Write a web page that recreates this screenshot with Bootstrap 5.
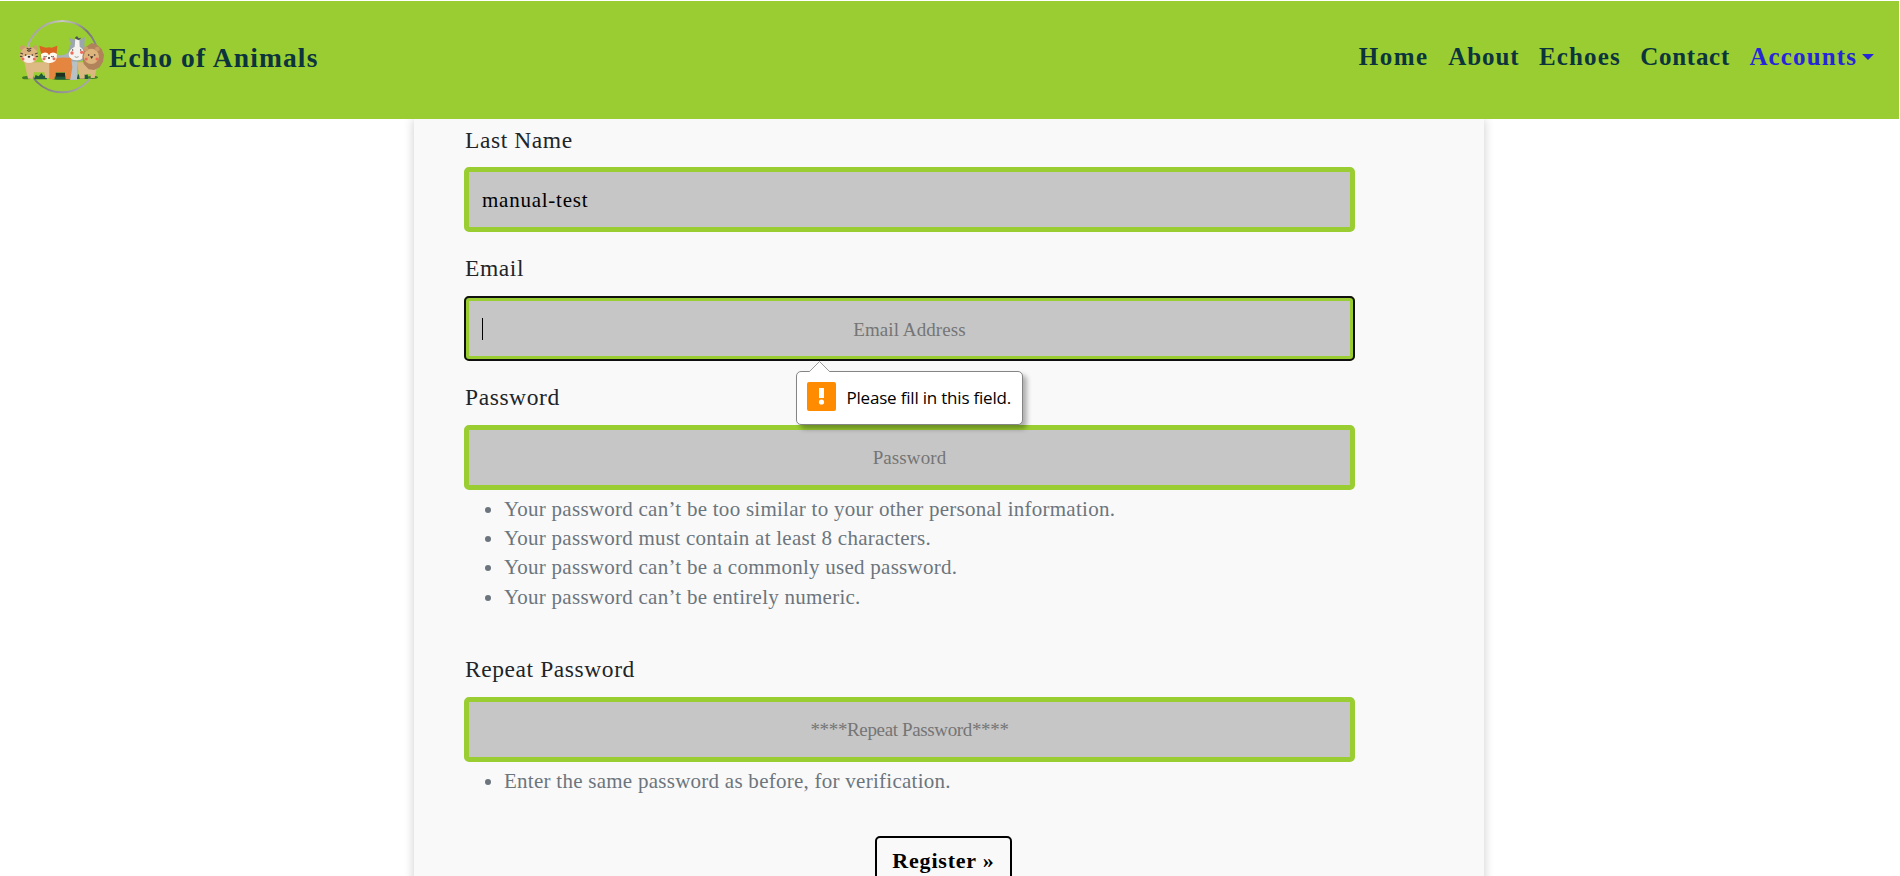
<!DOCTYPE html>
<html lang="en">
<head>
<meta charset="utf-8">
<meta name="viewport" content="width=device-width, initial-scale=1">
<title>Echo of Animals - Register</title>
<link href="https://cdn.jsdelivr.net/npm/bootstrap@5.3.0/dist/css/bootstrap.min.css" rel="stylesheet">
<style>
body{font-family:"Liberation Serif",serif;height:876px;overflow:hidden;background:#fff}
.site-nav{--bs-navbar-padding-y:0;background:#9acd32;height:118px;margin:1px 1px 0 0;padding:0 15px 0 10px;position:relative;z-index:2}
.site-nav .navbar-brand{font-size:27.5px;font-weight:700;letter-spacing:1.13px;color:#0c343d;margin:0;padding:0;line-height:30px}
.brand-logo{width:100px;height:90px;display:block;margin-top:-10px}
.brand-text{margin-top:-5px;margin-left:-1px}
.site-nav .nav-link{font-size:25px;font-weight:700;color:#0c343d;line-height:30px;padding:0 10px 0 9.5px!important;white-space:nowrap}
.site-nav .navbar-nav{margin-top:-7px}
.t-home{letter-spacing:1.5px}.t-about{letter-spacing:.9px}.t-echoes{letter-spacing:1.15px}.t-contact{letter-spacing:.7px}.t-accounts{letter-spacing:1.12px}
.site-nav .nav-link.dropdown-toggle{color:#2626d9}
.site-nav .dropdown-toggle::after{margin-left:5px;border-top-width:6px;border-right-width:6px;border-left-width:6px;vertical-align:5px}
.form-panel{width:1070px;height:800px;margin-left:414px;padding:4px 0 0 50px;background:#f9f9f9;box-shadow:0 0 10px rgba(0,0,0,.2)}
.field-row{width:891px;margin-bottom:19px}
.field-row label{font-size:23.5px;line-height:34px;margin-bottom:11px;display:block;letter-spacing:.58px;padding-left:1px}
.field-row:first-child label{margin-bottom:10px}
.field-row .form-control{height:65px;border:5px solid #9acd32;border-radius:5px;background:#c6c6c6;color:#000;font-size:21px;padding:1px 13px 0;letter-spacing:.75px;box-shadow:none}
.field-row .form-control::placeholder{font-size:19px;letter-spacing:.1px;text-align:center;color:#757575;opacity:1}
.field-row .form-control[type=password]{padding-top:0}
.field-row .tight::placeholder{letter-spacing:-.36px}
.field-row .is-active{outline:2px solid #101010;outline-offset:-2px}
.caret-bar{position:absolute;left:18px;top:22px;width:1px;height:22px;background:#000}
.help-list{font-size:21px;line-height:29.4px;color:#6c757d;margin:4.6px 0 0;padding-left:40px;letter-spacing:.26px}
.field-row.with-help{margin-bottom:39.8px}
.field-row.last{margin-bottom:40px}
.btn-register{margin-left:411px;width:137px;height:50px;border:2px solid #000;border-radius:5px;color:#000;font-size:22px;font-weight:700;letter-spacing:.8px;padding:0 0 2px;white-space:nowrap}
.hint{position:absolute;left:332px;top:75px;width:227px;height:54px;background:#fff;border:1px solid #858585;border-radius:5px;box-shadow:4px 4px 5px rgba(0,0,0,.3);font-family:"Open Sans",sans-serif;font-size:17px;letter-spacing:-.2px;color:#000;z-index:3;padding:0 0 0 10px;white-space:nowrap}
.hint-arrow{position:absolute;left:11px;top:-12px}
.hint-icon{margin-right:10.5px;margin-top:-4px}
</style>
</head>
<body>
<nav class="navbar site-nav d-flex flex-nowrap align-items-center justify-content-between">
  <a class="navbar-brand d-flex align-items-center" href="#">
    <svg class="brand-logo" viewBox="0 0 300 270">
      <defs>
        <linearGradient id="ring" x1="0" y1="0" x2="1" y2="1"><stop offset="0" stop-color="#777"/><stop offset=".25" stop-color="#c9c9c4"/><stop offset=".5" stop-color="#777"/><stop offset=".8" stop-color="#999"/><stop offset="1" stop-color="#ccc"/></linearGradient>
      </defs>
      <circle cx="156" cy="140" r="107" fill="none" stroke="url(#ring)" stroke-width="6"/>
      <!-- grass -->
      <g fill="#3f7d24"><ellipse cx="50" cy="203" rx="14" ry="5"/><ellipse cx="156" cy="204" rx="36" ry="6"/><ellipse cx="248" cy="202" rx="16" ry="5"/></g>
      <g fill="#205a3c"><path d="M72 208l5-13 9 4 8-10 7 9 8-3 2 13z"/><path d="M134 208l5-14 9 3 7-9 7 9 9-3 5 14z"/><path d="M200 207l4-14 8 3 7-10 6 9 8-2 2 14z"/></g>
      <!-- horse -->
      <path d="M135 135q25 4 45-10l20 20v64h-20v-40h-40z" fill="#a9b3ba"/>
      <path d="M183 101l-6-18 17 6 8-6 9 6 14-8-2 25q7 15 4 32-4 17-25 17-26 0-27-20-1-20 8-34z" fill="#9ca6ad"/>
      <path d="M196 86h12l1 24q13 8 14 20 1 20-21 21-24 0-26-16 0-16 18-25z" fill="#f5f3ef"/>
      <path d="M194 84l7-6 5 7 8-2-7 8-8-3z" fill="#4c5459"/>
      <path d="M181 155h20v54h-21z" fill="#b9c1c5"/>
      <!-- lion -->
      <path d="M201 157h62l-9 47h-12v-11h-18v13h-15z" fill="#dcb780"/>
      <path d="M245 99l16 5 14 13 7 18-3 20-10 17-17 8-16-2-15-16-4-22 5-25z" fill="#b0835a"/>
      <circle cx="244" cy="139" r="23" fill="#ddb47c"/><circle cx="228" cy="117" r="7" fill="#c99b6b"/><circle cx="262" cy="117" r="7" fill="#c99b6b"/>
      <!-- tiger -->
      <path d="M43 157h75v47h-12l-3-17H72l-4 19H54z" fill="#ddb983"/>
      <circle cx="38" cy="114" r="8" fill="#c9a06c"/><circle cx="76" cy="114" r="8" fill="#c9a06c"/>
      <ellipse cx="57" cy="136" rx="28" ry="25" fill="#ddb57e"/><ellipse cx="57" cy="147" rx="19" ry="12" fill="#f7eddf"/>
      <path d="M50 114l7 4 7-4M51 121l6 3 6-3M31 129l8 3M83 129l-8 3M30 139l7 1M84 139l-7 1" stroke="#55473a" stroke-width="3.500" fill="none"/>
      <!-- fox -->
      <path d="M118 148q30-8 65-4l4 28-6 36h-14l-2-21h-28l-4 21h-15z" fill="#e4863f"/>
      <path d="M137 188h28v12h-28z" fill="#20301f"/>
      <path d="M88 107l20 6q10-2 17 0l17-6-2 22q3 15-4 22-8 9-19 9t-20-9q-8-10-4-22z" fill="#da6420"/>
      <path d="M93 132q11-8 20-2l4 6 4-6q11-6 20 2 2 27-24 28-26-2-24-28z" fill="#fff8ef"/>
      <g fill="#3b302c"><circle cx="47" cy="135" r="2.5"/><circle cx="67" cy="135" r="2.5"/><ellipse cx="57" cy="140" rx="4" ry="3"/><path d="M101 137q5 5 9 0v3q-4 3-9 0zM123 137q5 5 9 0v3q-4 3-9 0z"/><circle cx="117" cy="144" r="3"/><circle cx="188" cy="120" r="2"/><circle cx="212" cy="120" r="2"/><circle cx="236" cy="135" r="2.5"/><circle cx="254" cy="135" r="2.5"/><path d="M240 139h10l-5 8z"/></g>
      <path d="M194 140q6 4 12 0" stroke="#776b69" stroke-width="2" fill="none"/>
      <g fill="#f0695a"><circle cx="39" cy="147" r="4.500"/><circle cx="73" cy="147" r="4.500"/><circle cx="102" cy="146" r="4.500"/><circle cx="132" cy="146" r="4.500"/><circle cx="186" cy="129" r="5"/><circle cx="215" cy="127" r="5"/><circle cx="229" cy="147" r="4.500"/><circle cx="261" cy="147" r="4.500"/></g>
    </svg>
    <span class="brand-text">Echo of Animals</span>
  </a>
  <ul class="navbar-nav flex-row">
    <li class="nav-item"><a class="nav-link t-home" href="#">Home</a></li>
    <li class="nav-item"><a class="nav-link t-about" href="#">About</a></li>
    <li class="nav-item"><a class="nav-link t-echoes" href="#">Echoes</a></li>
    <li class="nav-item"><a class="nav-link t-contact" href="#">Contact</a></li>
    <li class="nav-item dropdown"><a class="nav-link dropdown-toggle t-accounts" href="#" role="button">Accounts</a></li>
  </ul>
</nav>
<main class="form-panel">
  <form>
    <div class="field-row">
      <label for="last">Last Name</label>
      <input id="last" class="form-control" type="text" value="manual-test">
    </div>
    <div class="field-row">
      <label for="email">Email</label>
      <div class="position-relative">
        <input id="email" class="form-control is-active" type="email" placeholder="Email Address">
        <span class="caret-bar"></span>
        <div class="hint d-flex align-items-center" role="tooltip">
          <svg class="hint-arrow" width="24" height="13" viewBox="0 0 24 13"><path d="M1 12L11.500 1.500 22 12V13H1z" fill="#fff"/><path d="M1 12L11.500 1.500 22 12" fill="none" stroke="#9a9a9a"/></svg>
          <svg class="hint-icon" width="29" height="29" viewBox="0 0 29 29"><rect width="29" height="29" rx="2" fill="#ff8c00"/><path d="M12 6h5v10h-5z" fill="#fff"/><circle cx="14.500" cy="20" r="2.600" fill="#fff"/></svg>
          <span>Please fill in this field.</span>
        </div>
      </div>
    </div>
    <div class="field-row with-help">
      <label for="pw">Password</label>
      <input id="pw" class="form-control" type="password" placeholder="Password">
      <ul class="help-list">
        <li>Your password can’t be too similar to your other personal information.</li>
        <li>Your password must contain at least 8 characters.</li>
        <li>Your password can’t be a commonly used password.</li>
        <li>Your password can’t be entirely numeric.</li>
      </ul>
    </div>
    <div class="field-row last">
      <label for="pw2">Repeat Password</label>
      <input id="pw2" class="form-control tight" type="password" placeholder="****Repeat Password****">
      <ul class="help-list"><li>Enter the same password as before, for verification.</li></ul>
    </div>
    <button class="btn btn-register" type="button">Register »</button>
  </form>
</main>
<script src="https://cdn.jsdelivr.net/npm/bootstrap@5.3.0/dist/js/bootstrap.bundle.min.js"></script>
</body>
</html>
